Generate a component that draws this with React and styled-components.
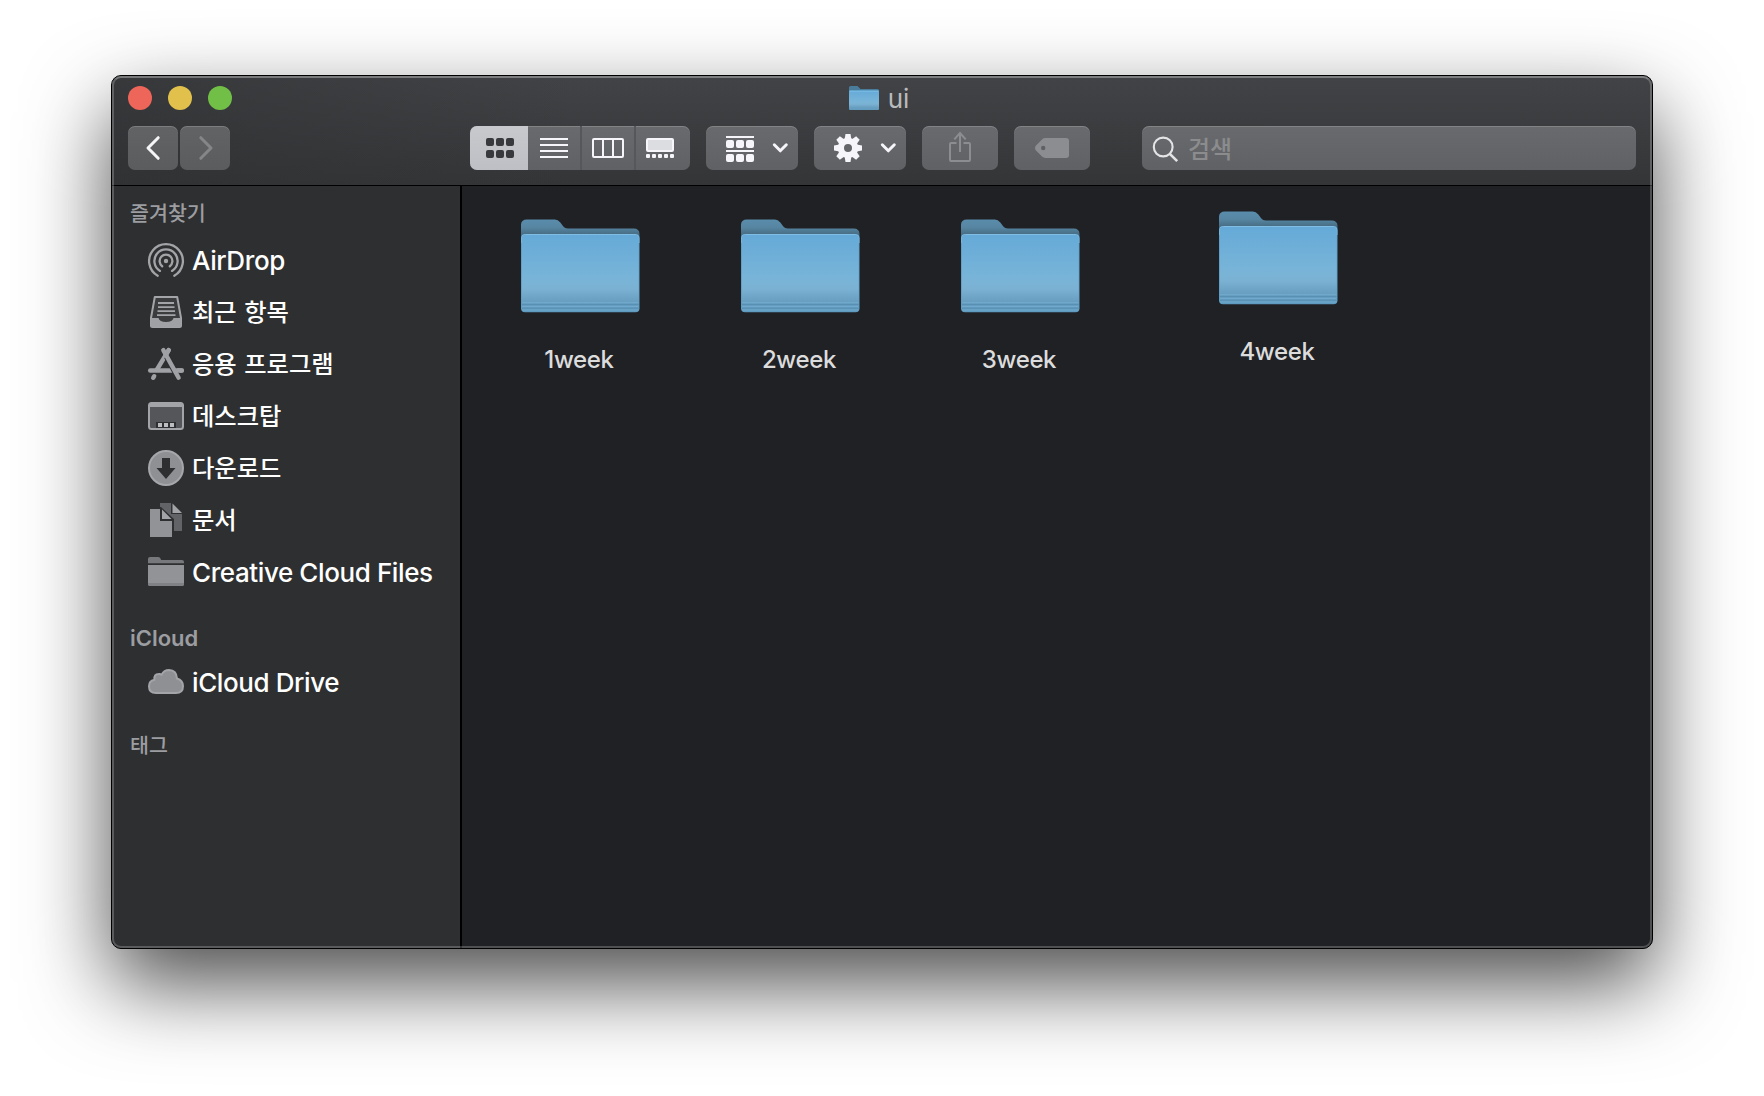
import React from 'react';
import styled, { createGlobalStyle } from 'styled-components';

const GlobalStyle = createGlobalStyle`
    * {
        box-sizing: border-box;
    }
    body {
        margin: 0;
        background-color: white;
        font-family: Inter, 'Noto Sans CJK KR', sans-serif;
    }
    svg {
        display: block;
        flex: none;
        overflow: visible;
    }
`
const Desktop = styled.div`
    height: 1096px;
    padding: 75px 111px 147px;
    overflow: hidden;
`
const Window = styled.div`
    position: relative;
    display: flex;
    flex-direction: column;
    height: 874px;
    border: 1px solid black;
    border-radius: 10px;
    background-color: #202124;
    box-shadow: 0 35px 84px rgba(0, 0, 0, 0.7);

    /* light rim drawn over the panels */
    &::after {
        content: '';
        position: absolute;
        inset: 0;
        border-radius: 9px;
        border: 2px solid rgba(255, 255, 255, 0.21);
        border-top-color: rgba(255, 255, 255, 0.32);
        pointer-events: none;
    }
`
const Header = styled.div`
    height: 110px;
    flex: none;
    border-bottom: 1px solid black;
    border-radius: 9px 9px 0 0;
    background: linear-gradient(to right, rgba(46, 47, 49, 0.55), rgba(46, 47, 49, 0) 30%),
        linear-gradient(#424346, #343537);
`
const TitleBar = styled.div`
    display: grid;
    grid-template-columns: 1fr auto 1fr;
    align-items: center;
    height: 44px;
    margin-bottom: 6px;
    padding: 0 16px;
`
const Lights = styled.div`
    display: flex;
    gap: 16px;
`
const Light = styled.div`
    width: 24px;
    height: 24px;
    border-radius: 50%;
    background-color: ${props => props.$color};
`
const Title = styled.div`
    display: flex;
    align-items: center;
    gap: 9px;
    padding-right: 6px;
    font-size: 26px;
    line-height: 40px;
    color: #b9babc;

    span {
        padding-top: 2px;
    }
`
const Toolbar = styled.div`
    display: flex;
    height: 44px;
    padding: 0 16px;
`
const Button = styled.div`
    display: flex;
    align-items: center;
    justify-content: center;
    width: ${props => props.$width}px;
    height: 44px;
    margin-left: ${props => props.$gap || 0}px;
    border-radius: 7px;
    background: linear-gradient(${props => props.$dim ? '#626365, #5b5c5e' : '#696a6d, #606164'});
    box-shadow: inset 0 1px 0 rgba(255, 255, 255, 0.17);
`
const MenuButton = styled(Button)`
    justify-content: flex-start;
    gap: 18px;
    padding-left: 20px;
`
const Segments = styled(Button)`
    justify-content: flex-start;
    overflow: hidden;
`
const Segment = styled.div`
    display: flex;
    align-items: center;
    justify-content: center;
    width: ${props => props.$width}px;
    height: 44px;
    padding-left: ${props => props.$active ? 2 : 0}px;
    border-right: ${props => props.$divider ? '2px solid #56575a' : 'none'};
    background: ${props => props.$active ? 'linear-gradient(#c8c9cd, #bebfc4)' : 'none'};
`
const Search = styled(Button)`
    flex: 1;
    justify-content: flex-start;
    gap: 10px;
    padding-left: 10px;
    font-size: 24px;
    font-weight: 500;
    color: #8b8c8e;

    span {
        padding-bottom: 2px;
    }
`
const Body = styled.div`
    display: flex;
    flex: 1;
`
const Sidebar = styled.div`
    width: 350px;
    border-right: 2px solid black;
    border-radius: 0 0 0 9px;
    background-color: #2e2f31;
`
const Heading = styled.div`
    height: 36px;
    margin-top: ${props => props.$top}px;
    margin-bottom: ${props => props.$bottom || 0}px;
    padding-left: 18px;
    font-size: ${props => props.$hangul ? 20.6 : 22}px;
    font-weight: ${props => props.$hangul ? 500 : 600};
    line-height: 36px;
    color: #9c9da0;
`
const Item = styled.div`
    display: flex;
    align-items: center;
    gap: 8px;
    height: 52px;
    padding-left: 36px;
    font-size: ${props => props.$hangul ? 24.3 : 26}px;
    font-weight: 500;
    line-height: 50px;
    white-space: nowrap;
    letter-spacing: ${props => props.$hangul ? 0 : -0.4}px;
    word-spacing: ${props => props.$hangul ? 1 : 0}px;
    color: white;

    span {
        padding-top: ${props => props.$hangul ? 0 : 2}px;
    }
`
const Files = styled.div`
    display: flex;
    align-items: flex-start;
    gap: 101px;
    padding: 33px 0 0 59px;
`
const File = styled.div`
    width: 119px;
    margin-left: ${props => props.$shifted ? 38 : 0}px;
    margin-top: ${props => props.$shifted ? -8 : 0}px;
`
const FileName = styled.div`
    margin: 25px 3px 0 0;
    font-size: 24px;
    font-weight: 500;
    line-height: 44px;
    letter-spacing: -0.35px;
    text-align: center;
    color: #dcdcdd;
`

function BlueFolder() {
    return (
        <svg width="118.5" height="94" viewBox="0 0 119 94" preserveAspectRatio="none">
            <defs>
                <linearGradient id="back" x1="0" y1="0" x2="0" y2="1">
                    <stop offset="0" stopColor="#5a8dac" />
                    <stop offset="0.35" stopColor="#5685a1" />
                    <stop offset="0.65" stopColor="#466b82" />
                </linearGradient>
                <linearGradient id="front" x1="0" y1="0" x2="0" y2="1">
                    <stop offset="0" stopColor="#65aad8" />
                    <stop offset="0.55" stopColor="#78b4d8" />
                    <stop offset="0.7" stopColor="#7bb2d3" />
                    <stop offset="0.87" stopColor="#689fc1" />
                    <stop offset="1" stopColor="#5f9bbf" />
                </linearGradient>
            </defs>
            <path d="M0 20V6Q0 0.5 6 0.5H34Q37 0.5 39.5 3.5L42.5 7.5Q44 9.5 47 9.5H113Q119 9.5 119 15V24H0Z" fill="url(#back)" />
            <rect x="0" y="15" width="119" height="78.2" rx="4" fill="#5c9cc4" />
            <path d="M0.7 24V19Q0.7 15.5 4.5 15.5H114.5Q118.3 15.5 118.3 19V24" fill="none" stroke="#80bde2" strokeWidth="1" />
            <rect x="0.8" y="16" width="117.4" height="76.8" rx="3.5" fill="url(#front)" />
            <path d="M1 83.5H118M1 87.5H118M1 91H118" stroke="#70a9cb" strokeWidth="1" />
            <path d="M1 85.5H118M1 89.3H118" stroke="#5890b3" strokeWidth="1.1" />
        </svg>
    )
}

function TitleFolder() {
    return (
        <svg width="30" height="24" viewBox="0 0 30 24">
            <path d="M0 6V1.5Q0 0 1.5 0H8.5L11.5 3H28.5Q30 3 30 4.5V8H0Z" fill="#4a7d9c" />
            <rect y="4.5" width="30" height="19.5" rx="1" fill="url(#front)" />
            <path d="M0.5 5.2H29.5" stroke="#7cc0e8" />
        </svg>
    )
}

function Arrow({ flip, color }) {
    return (
        <svg width="15" height="24" viewBox="0 0 15 24" transform={flip ? 'scale(-1 1)' : undefined}>
            <path d="M12.2 1.7L2 12L12.2 22.3" fill="none" stroke={color} strokeWidth="3" strokeLinecap="round" strokeLinejoin="round" />
        </svg>
    )
}

function Chevron() {
    return (
        <svg width="16" height="10" viewBox="0 0 16 10">
            <path d="M2.3 1.8L8.3 7.8L14.3 1.8" fill="none" stroke="#f6f6fa" strokeWidth="3" strokeLinecap="round" strokeLinejoin="round" />
        </svg>
    )
}

// a row of three rounded squares, used by the icon and group view glyphs
function Squares({ y, color }) {
    return [0, 10, 20].map(x => <rect key={x} x={x} y={y} width="8" height="8" rx="2" fill={color} />)
}

function GridIcon() {
    return (
        <svg width="28" height="20">
            <Squares y={0} color="#38393c" />
            <Squares y={12} color="#38393c" />
        </svg>
    )
}

function ListIcon() {
    return (
        <svg width="28" height="20">
            <path d="M0 1H28M0 7H28M0 13H28M0 19H28" stroke="#f6f6fa" strokeWidth="2" />
        </svg>
    )
}

function ColumnsIcon() {
    return (
        <svg width="32" height="20">
            <rect x="1" y="1" width="30" height="18" rx="1" fill="none" stroke="#f6f6fa" strokeWidth="2" />
            <path d="M11 1V19M21 1V19" stroke="#f6f6fa" strokeWidth="2" />
        </svg>
    )
}

function GalleryIcon() {
    return (
        <svg width="28" height="20">
            <rect x="1" y="1" width="26" height="12" rx="1" fill="#dcdde1" stroke="#f6f6fa" strokeWidth="2" />
            {[0, 6, 12, 18, 24].map(x => <rect key={x} x={x} y="16" width="4" height="4" rx="1" fill="#f6f6fa" />)}
        </svg>
    )
}

function GroupIcon() {
    return (
        <svg width="28" height="28" viewBox="0 0 28 28">
            <path d="M0 3H28M0 17H28" stroke="#f6f6fa" strokeWidth="2" />
            <Squares y={6} color="#f6f6fa" />
            <Squares y={20} color="#f6f6fa" />
        </svg>
    )
}

function GearIcon() {
    const angles = [0, 45, 90, 135, 180, 225, 270, 315]
    return (
        <svg width="28" height="28" viewBox="-14 -14 28 28">
            <circle r="7.1" fill="none" stroke="#f6f6fa" strokeWidth="6.2" />
            {angles.map(angle => (
                <path key={angle} d="M-3.4 -8.5L-2.5 -14H2.5L3.4 -8.5Z" fill="#f6f6fa" transform={'rotate(' + angle + ')'} />
            ))}
        </svg>
    )
}

function ShareIcon() {
    return (
        <svg width="22" height="32" viewBox="0 0 22 32" fill="none" stroke="#8c8d90" strokeWidth="2">
            <path d="M7.5 11H2Q1 11 1 12V28Q1 29 2 29H20Q21 29 21 28V12Q21 11 20 11H14.5" />
            <path d="M11 20V1M5.3 7.3L11 1L16.7 7.3" />
        </svg>
    )
}

function TagIcon() {
    return (
        <svg width="34" height="20" viewBox="0 0 34 20">
            <path d="M10.5 0H31Q34 0 34 3V17Q34 20 31 20H10.5Q8.5 20 7 18.6L1 12.5Q-1 10 1 7.5L7 1.4Q8.5 0 10.5 0Z" fill="#8c8d90" />
            <circle cx="8.2" cy="10" r="2.2" fill="#5f6063" />
        </svg>
    )
}

function SearchIcon() {
    return (
        <svg width="26" height="26" viewBox="0 0 26 26" fill="none" stroke="#e4e4e6" strokeWidth="2.1">
            <circle cx="11.2" cy="12" r="9.4" />
            <path d="M17.8 18.8L25.2 26.2" strokeWidth="2.6" />
        </svg>
    )
}

function AirDropIcon() {
    return (
        <svg width="36" height="36" viewBox="-18 -19 36 36" fill="none" stroke="#a3a4a8" strokeWidth="2.3" strokeLinecap="round">
            <path d="M-8.3 14.7A16.9 16.9 0 1 1 8.3 14.7" />
            <path d="M-6 9.9A11.6 11.6 0 1 1 6 9.9" />
            <path d="M-3.8 5.2A6.4 6.4 0 1 1 3.8 5.2" />
            <circle r="2.2" fill="#a3a4a8" stroke="none" />
        </svg>
    )
}

function RecentsIcon() {
    return (
        <svg width="36" height="32" viewBox="0 0 36 32">
            <path d="M6.8 1H29.2L33 22V29.5Q33 31 31.5 31H4.5Q3 31 3 29.5V22Z" fill="#3b3c3e" stroke="#a3a4a8" strokeWidth="2" strokeLinejoin="round" />
            <path d="M3 22H10.5Q11.5 26 18 26Q24.5 26 25.5 22H33V31H3Z" fill="#a0a1a4" />
            <path d="M10 7H26M10 11.2H26.5M9.5 15.2H27M9 19.2H27.5" stroke="#a3a4a8" strokeWidth="1.8" />
        </svg>
    )
}

function AppsIcon() {
    return (
        <svg width="36" height="32" viewBox="0 0 36 32" fill="none" stroke="#a0a1a4" strokeWidth="4.4" strokeLinecap="round">
            <path d="M20.7 2.1L9 21.5M6.2 28.2L5.2 29.8" />
            <path d="M2.2 22.5H33.8" />
            <path d="M19 8.5L30.6 29.7" stroke="#2e2f31" strokeWidth="6.4" strokeLinecap="butt" />
            <path d="M20.7 2.1L17.5 7.4" />
            <path d="M15.3 2.1L30.6 29.7" />
            <path d="M28 22.5H33.8" />
        </svg>
    )
}

function DesktopIcon() {
    return (
        <svg width="36" height="28" viewBox="0 0 36 28">
            <rect x="1" y="1" width="34" height="26" rx="2.5" fill="#55565a" stroke="#a3a4a8" strokeWidth="2" />
            <path d="M2 1H34V5H2Z" fill="#a3a4a8" />
            <path d="M8 20H28V26H8Z" fill="#2e2f31" />
            <path d="M10 21H14V25H10ZM16 21H20V25H16ZM22 21H26V25H22Z" fill="#bcbdc0" />
        </svg>
    )
}

function DownloadIcon() {
    return (
        <svg width="36" height="36" viewBox="0 0 36 36">
            <circle cx="18" cy="18" r="17" fill="#8f9094" stroke="#a6a7ab" strokeWidth="2" />
            <path d="M14 8H22V18H27.5L18 29L8.5 18H14Z" fill="#2e2f31" />
        </svg>
    )
}

function DocumentsIcon() {
    return (
        <svg width="36" height="34" viewBox="0 0 36 34">
            <path d="M12 0H23V11H34V28H26V16L13 4H12Z" fill="#626367" />
            <path d="M24.5 0.5L34 10H24.5Z" fill="#a3a4a8" />
            <path d="M2 6H12V18H24V34H2Z" fill="#929397" />
            <path d="M14 6.5L23.5 16H14Z" fill="#a3a4a8" />
        </svg>
    )
}

function FolderIcon() {
    return (
        <svg width="36" height="30" viewBox="0 0 36 30">
            <path d="M0 6.2V2Q0 0 2 0H10Q11.5 0 12.3 1.3L13.2 3H34Q36 3 36 5V6.2Z" fill="#77787b" />
            <path d="M0 8H36V27Q36 29 34 29H2Q0 29 0 27Z" fill="#929397" />
            <path d="M0 26H36V27Q36 29 34 29H2Q0 29 0 27Z" fill="#808185" />
        </svg>
    )
}

function CloudIcon() {
    return (
        <svg width="36" height="26" viewBox="0 0 36 26">
            <path d="M8 24Q1 24 1 17.2Q1 12 6.3 10.8Q6 5 10.5 5Q12.3 4.6 13.6 5.6Q16 1 21 1Q28.6 1.3 29 9.5Q35 11.5 35 17Q35 24 28 24Z" fill="#8f9094" stroke="#a3a4a8" strokeWidth="2" />
        </svg>
    )
}

const favorites = [
    { name: 'AirDrop', icon: AirDropIcon },
    { name: '최근 항목', icon: RecentsIcon, hangul: true },
    { name: '응용 프로그램', icon: AppsIcon, hangul: true },
    { name: '데스크탑', icon: DesktopIcon, hangul: true },
    { name: '다운로드', icon: DownloadIcon, hangul: true },
    { name: '문서', icon: DocumentsIcon, hangul: true },
    { name: 'Creative Cloud Files', icon: FolderIcon },
]

const files = ['1week', '2week', '3week', '4week']

export default function App() {
    const favoriteItems = favorites.map(({ name, icon: Icon, hangul }) => {
        return <Item key={name} $hangul={hangul}>
            <Icon />
            <span>{name}</span>
        </Item>
    })
    return (
        <Desktop>
            <GlobalStyle />
            <Window>
                <Header>
                    <TitleBar>
                        <Lights>
                            <Light $color="#ee6559" />
                            <Light $color="#e1c04c" />
                            <Light $color="#72bf47" />
                        </Lights>
                        <Title><TitleFolder /><span>ui</span></Title>
                    </TitleBar>
                    <Toolbar>
                        <Button $width={50} $dim><Arrow color="#f6f6f8" /></Button>
                        <Button $width={50} $gap={2} $dim><Arrow flip color="#858688" /></Button>
                        <Segments $width={220} $gap={240}>
                            <Segment $width={58} $active><GridIcon /></Segment>
                            <Segment $width={54} $divider><ListIcon /></Segment>
                            <Segment $width={54} $divider><ColumnsIcon /></Segment>
                            <Segment $width={48}><GalleryIcon /></Segment>
                        </Segments>
                        <MenuButton $width={92} $gap={16}><GroupIcon /><Chevron /></MenuButton>
                        <MenuButton $width={92} $gap={16}><GearIcon /><Chevron /></MenuButton>
                        <Button $width={76} $gap={16}><ShareIcon /></Button>
                        <Button $width={76} $gap={16}><TagIcon /></Button>
                        <Search $gap={52}><SearchIcon /><span>검색</span></Search>
                    </Toolbar>
                </Header>
                <Body>
                    <Sidebar>
                        <Heading $top={10} $bottom={2} $hangul>즐겨찾기</Heading>
                        {favoriteItems}
                        <Heading $top={22}>iCloud</Heading>
                        <Item><CloudIcon /><span>iCloud Drive</span></Item>
                        <Heading $top={20} $hangul>태그</Heading>
                    </Sidebar>
                    <Files>
                        {files.map(name => (
                            <File key={name} $shifted={name === '4week'}>
                                <BlueFolder />
                                <FileName>{name}</FileName>
                            </File>
                        ))}
                    </Files>
                </Body>
            </Window>
        </Desktop>
    )
}
